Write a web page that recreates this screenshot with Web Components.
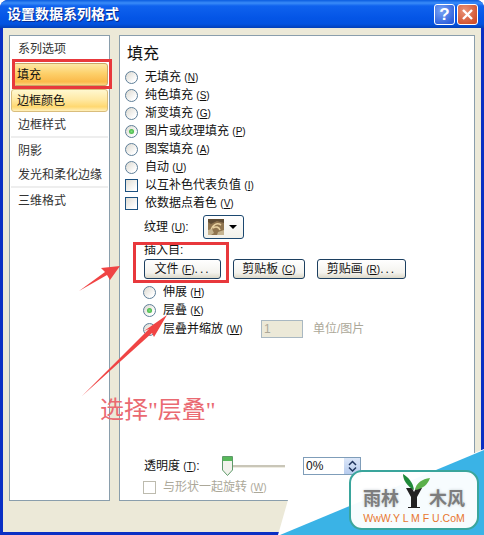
<!DOCTYPE html>
<html lang="zh">
<head>
<meta charset="utf-8">
<title>设置数据系列格式</title>
<style>
  html, body { margin: 0; background: #fff; }
  body { font: 12px/18px "Liberation Sans", "Noto Sans CJK SC", sans-serif; color: #111; }
</style>
</head>
<body>
<format-dialog>
  <span slot="title">设置数据系列格式</span>

  <nav-list slot="nav">
    <nav-item>系列选项</nav-item>
    <nav-item state="selected">填充</nav-item>
    <nav-item state="hover">边框颜色</nav-item>
    <nav-item>边框样式</nav-item>
    <nav-sep></nav-sep>
    <nav-item>阴影</nav-item>
    <nav-item>发光和柔化边缘</nav-item>
    <nav-sep></nav-sep>
    <nav-item>三维格式</nav-item>
  </nav-list>

  <fill-panel slot="panel">
    <x-option>无填充 <x-key>N</x-key></x-option>
    <x-option>纯色填充 <x-key>S</x-key></x-option>
    <x-option>渐变填充 <x-key>G</x-key></x-option>
    <x-option checked>图片或纹理填充 <x-key>P</x-key></x-option>
    <x-option>图案填充 <x-key>A</x-key></x-option>
    <x-option>自动 <x-key>U</x-key></x-option>
    <x-option type="check">以互补色代表负值 <x-key>I</x-key></x-option>
    <x-option type="check">依数据点着色 <x-key>V</x-key></x-option>

    <texture-row>纹理 <x-key>U</x-key>:</texture-row>

    <insert-group>
      <span slot="label">插入自:</span>
      <x-button w="77">文件 <x-key>F</x-key><span style="letter-spacing:2px">...</span></x-button>
      <x-button w="72">剪贴板 <x-key>C</x-key></x-button>
      <x-button w="89">剪贴画 <x-key>R</x-key><span style="letter-spacing:2px">...</span></x-button>
    </insert-group>

    <x-option indent>伸展 <x-key>H</x-key></x-option>
    <x-option indent checked>层叠 <x-key>K</x-key></x-option>
    <scale-row>层叠并缩放 <x-key>W</x-key></scale-row>

    <opacity-row slot="bottom">透明度 <x-key>T</x-key>:</opacity-row>
    <x-option slot="bottom" type="check" indent disabled>与形状一起旋转 <x-key>W</x-key></x-option>
  </fill-panel>
</format-dialog>
<photo-marks></photo-marks>
<site-badge></site-badge>

<script>
// every element keeps its styles in its own shadow root
class Base extends HTMLElement {
  constructor() {
    super();
    this.attachShadow({ mode: "open" });
  }
  connectedCallback() {
    this.shadowRoot.innerHTML = `<style>${this.constructor.styles}</style>${this.markup()}`;
  }
  markup() { return "<slot></slot>"; }
}

class FormatDialog extends Base {
  static styles = `
    :host { display: flex; flex-direction: column; width: 484px; height: 535px; box-sizing: border-box;
      background: #0a2fc4; border-radius: 8px 8px 0 0; overflow: hidden; }
    .bar { height: 28px; flex: none; display: flex; align-items: center; padding: 0 6px 0 7px;
      background: linear-gradient(#0a5ce0 0, #3a8cf8 3px, #0f62ee 6px, #0455e6 18px, #0353e0 24px, #0340b8 28px);
      color: #fff; font-weight: bold; font-size: 14px; text-shadow: 1px 1px 0 #0a2c90; }
    .title { flex: 1; }
    .cap { width: 21px; height: 21px; box-sizing: border-box; border: 1px solid #fff; border-radius: 3px;
      margin-left: 2px; display: grid; place-items: center; }
    .help { background: radial-gradient(circle at 35% 30%, #7aa4f4, #2d5fdc 80%); color: #fff; font: bold 17px/1 "Liberation Sans", sans-serif; text-shadow: none; }
    .close { background: radial-gradient(circle at 35% 30%, #ea9478, #d0502c 80%); }
    .body { flex: 1; margin: 0 3px 3px; background: #ece9d8; display: flex; gap: 9px; padding: 7px 6px 31px; }
    ::slotted([slot=nav]) { width: 101px; }
    ::slotted([slot=panel]) { width: 356px; }
  `;
  markup() {
    return `
      <div class="bar">
        <div class="title"><slot name="title"></slot></div>
        <div class="cap help">?</div>
        <div class="cap close">
          <svg width="13" height="13" viewBox="0 0 13 13"><path d="M2 2 11 11M11 2 2 11" stroke="#fff" stroke-width="2.4"/></svg>
        </div>
      </div>
      <div class="body">
        <slot name="nav"></slot>
        <slot name="panel"></slot>
      </div>`;
  }
}

class NavList extends Base {
  static styles = `
    :host { display: flex; flex-direction: column; box-sizing: border-box; border: 1px solid #8a9eac;
      background: #fff; padding: 0 1px; }
  `;
}

class NavItem extends Base {
  static styles = `
    :host { display: flex; align-items: center; height: 24px; box-sizing: border-box; padding: 1px 0 0 7px; flex: none; color: #333; }
    :host([state]) { height: 23px; margin-top: 3px; border-radius: 3px; color: #111; padding-left: 6px; }
    :host([state=selected]) { margin-left: 2px; margin-right: 0; border: 1px solid #c9a668; padding-left: 3px;
      background: linear-gradient(#fde7a4, #fdd06a 45%, #fbb94a 85%, #fdd480); }
    :host([state=hover]) { border: 1px solid #d9bd7c; padding-left: 5px;
      background: linear-gradient(#fff7cf, #ffe9a4 45%, #ffd870 80%, #fff0bc); }
  `;
}

class NavSep extends Base {
  static styles = `:host { display: block; height: 2px; background: #eeeeee; flex: none; }`;
  markup() { return ""; }
}

class FillPanel extends Base {
  static styles = `
    :host { display: flex; flex-direction: column; box-sizing: border-box; border: 1px solid #8a9eac;
      background: #fff; padding: 7px 5px 4px; }
    h2 { margin: 0 0 4px; font: 16px/21px "Liberation Sans", "Noto Sans CJK SC", sans-serif; padding-left: 2px; }
    .bottom { margin-top: auto; display: flex; flex-direction: column; gap: 2px; }
  `;
  markup() {
    return `<h2>填充</h2><slot></slot><div class="bottom"><slot name="bottom"></slot></div>`;
  }
}

class XKey extends Base {
  static styles = `:host { display: inline; font-size: 10px; }`;
  markup() { return `(<u><slot></slot></u>)`; }
}

class XOption extends Base {
  static styles = `
    :host { display: flex; align-items: center; height: 18px; gap: 7px; flex: none; }
    :host([indent]) { margin-left: 18px; }
    :host([disabled]) { color: #aca899; }
    .text { padding-top: 1px; }
    .radio { width: 13px; height: 13px; box-sizing: border-box; border-radius: 50%; border: 1px solid #5f7f99;
      background: linear-gradient(135deg, #dcd9d0, #fff 80%); display: grid; place-items: center; }
    .radio i { width: 5px; height: 5px; border-radius: 50%; background: radial-gradient(#7fe07f, #2ea32e); }
    .check { width: 13px; height: 13px; box-sizing: border-box; border: 1px solid #1c5180;
      background: linear-gradient(135deg, #e0ddd4, #fff 85%); }
    :host([disabled]) .check { border-color: #bdbbae; background: #fff; }
  `;
  markup() {
    const box = this.getAttribute("type") === "check"
      ? `<span class="check"></span>`
      : `<span class="radio">${this.hasAttribute("checked") ? "<i></i>" : ""}</span>`;
    return `${box}<span class="text"><slot></slot></span>`;
  }
}

class TextureRow extends Base {
  static styles = `
    :host { display: flex; align-items: center; height: 24px; margin-top: 3px; padding-left: 19px; flex: none; }
    .label { width: 59px; }
    .pick { width: 41px; height: 24px; box-sizing: border-box; border: 1px solid #1c4870; border-radius: 3px;
      background: linear-gradient(#fff, #f2f1ea); display: flex; align-items: center; gap: 5px; padding-left: 4px; }
    .arrow { width: 0; height: 0; border: 4px solid transparent; border-top: 4px solid #000; border-bottom: 0; }
  `;
  markup() {
    return `
      <span class="label"><slot></slot></span>
      <span class="pick">
        <svg width="16" height="16" viewBox="0 0 16 16">
          <rect width="16" height="16" fill="#8f744e"/>
          <path d="M0 0H16V4L9 2 3 5 0 3Z" fill="#5f4c34"/>
          <path d="M3 12C4 6 9 3 13 6M5 9C8 7 11 8 12 11" stroke="#e6cf9e" stroke-width="1.6" fill="none"/>
          <path d="M0 11 4 10 6 14 3 16H0ZM10 13 16 11V16H9Z" fill="#c4b38f"/>
        </svg>
        <span class="arrow"></span>
      </span>`;
  }
}

class InsertGroup extends Base {
  static styles = `
    :host { display: block; padding-left: 19px; flex: none; }
    .label { height: 16px; line-height: 17px; margin-top: 3px; }
    .btns { display: flex; gap: 12px; margin-top: 1px; margin-bottom: 4px; }
  `;
  markup() {
    return `<div class="label"><slot name="label"></slot></div><div class="btns"><slot></slot></div>`;
  }
}

class XButton extends Base {
  static styles = `
    :host { display: flex; align-items: center; justify-content: center; height: 20px; box-sizing: border-box;
      border: 1px solid #1c3f60; border-radius: 3px; padding-top: 1px;
      background: linear-gradient(#fff, #f4f3ee 70%, #dcd8c8); }
  `;
  markup() { return `<span><slot></slot></span>`; }
  connectedCallback() {
    super.connectedCallback();
    this.style.width = this.getAttribute("w") + "px";
  }
}

class ScaleRow extends Base {
  static styles = `
    :host { display: flex; align-items: center; height: 20px; margin-left: 18px; flex: none; }
    .radio { width: 13px; height: 13px; box-sizing: border-box; border-radius: 50%; border: 1px solid #5f7f99;
      background: linear-gradient(135deg, #dcd9d0, #fff 80%); margin-right: 7px; }
    .text { width: 98px; }
    .num { width: 42px; height: 18px; box-sizing: border-box; border: 1px solid #a9b8c2; background: #ece9d8;
      color: #aca899; padding-left: 2px; line-height: 16px; }
    .unit { margin-left: 10px; color: #aca899; }
  `;
  markup() {
    return `<span class="radio"></span><span class="text"><slot></slot></span>
      <span class="num">1</span><span class="unit">单位/图片</span>`;
  }
}

class OpacityRow extends Base {
  static styles = `
    :host { display: flex; align-items: center; height: 20px; padding-left: 19px; flex: none; }
    .label { width: 78px; }
    .slider { width: 81px; height: 20px; position: relative; display: flex; align-items: center; }
    .track { width: 63px; height: 2px; background: #c9c6b8; border-bottom: 1px solid #eeece2; }
    .thumb { position: absolute; left: 0; top: 0; }
    .num { width: 58px; height: 18px; box-sizing: border-box; border: 1px solid #7f9db9; display: flex;
      align-items: center; justify-content: space-between; padding: 0 0 0 2px; background: #fff; }
    .spin { width: 16px; height: 16px; background: linear-gradient(#dbe6f8, #b7ccee); display: grid; place-items: center; }
  `;
  markup() {
    return `
      <span class="label"><slot></slot></span>
      <span class="slider">
        <span class="track"></span>
        <svg class="thumb" width="11" height="20" viewBox="0 0 11 20">
          <path d="M.5 .5H10.5V14L5.5 19.5 .5 14Z" fill="#f2f2ec" stroke="#5f9a6a"/>
          <rect x="1" y="1" width="9" height="4" fill="#57b85a"/>
        </svg>
      </span>
      <span class="num">0%
        <span class="spin">
          <svg width="9" height="12" viewBox="0 0 9 12"><path d="M1 5 4.5 1.5 8 5M1 7.5 4.5 11 8 7.5" fill="none" stroke="#20355e" stroke-width="1.5"/></svg>
        </span>
      </span>`;
  }
}

// red marks drawn over the photographed dialog
class PhotoMarks extends Base {
  static styles = `
    :host { position: absolute; left: 0; top: 0; width: 484px; height: 535px; pointer-events: none; }
    svg { position: absolute; left: 0; top: 0; }
    .note { position: absolute; left: 100px; top: 393px; font-size: 24px; line-height: 34px; color: #ea6a72;
      font-family: "Liberation Serif", "Noto Sans CJK SC", sans-serif; white-space: nowrap; }
  `;
  markup() {
    return `
      <svg width="484" height="535" viewBox="0 0 484 535">
        <rect x="13.5" y="60.5" width="97" height="27" fill="none" stroke="#e8383c" stroke-width="3"/>
        <rect x="134.5" y="243.5" width="93" height="38" fill="none" stroke="#e8383c" stroke-width="3"/>
        <path d="M79 291 105 272 101 268 120 266 110 280 107 275Z" fill="#f04444"/>
        <path d="M82 396 149 329 144 331 167 315 154 337 152 333Z" fill="#f04444"/>
      </svg>
      <div class="note">选择"层叠"</div>`;
  }
}

class SiteBadge extends Base {
  static styles = `
    :host { position: absolute; left: 0; top: 0; width: 484px; height: 535px; pointer-events: none; }
    svg { position: absolute; left: 0; top: 0; }
    .card { position: absolute; left: 349px; top: 470px; width: 130px; height: 60px; box-sizing: border-box;
      border: 2px solid #3aa59c; border-radius: 13px; background: rgba(255,255,255,.96);
      display: flex; flex-direction: column; align-items: center; padding-top: 14px; }
    .name { display: flex; height: 22px; font: bold 18px/22px "Noto Sans CJK SC", sans-serif;
      color: #7d7d7d; text-shadow: 0 0 3px #c4ccd0; }
    .name .tree { position: static; flex: none; align-self: flex-end; overflow: visible; }
    .site { font: 10.5px/14px "Liberation Sans", sans-serif; color: #e8772e; margin-top: 3px; white-space: nowrap; }
  `;
  markup() {
    return `
      <svg width="484" height="535" viewBox="0 0 484 535">
        <path d="M288 500 278 535H484V449L465 457Z" fill="#fff"/>
        <path d="M280 535 484 450V535Z" fill="#3ab3e6"/>
      </svg>
      <div class="card">
        <div class="name">
          <span>雨林</span>
          <svg class="tree" width="30" height="36" viewBox="0 0 30 36">
            <path d="M7 16H13L15 20 17 16H23L18 25V35H21V36H9V35H12V25Z" fill="#222"/>
            <path d="M15 18C14 10 9 5 4 2 4 8 8 14 15 18Z" fill="#1f8a3a"/>
            <path d="M16 18C17 11 23 7 31 6 29 12 24 17 16 18Z" fill="#5bb04a"/>
          </svg>
          <span>木风</span>
        </div>
        <div class="site">WwW.Y L M F U.CoM</div>
      </div>`;
  }
}

const tags = {
  "format-dialog": FormatDialog, "nav-list": NavList, "nav-item": NavItem, "nav-sep": NavSep,
  "fill-panel": FillPanel, "x-key": XKey, "x-option": XOption, "texture-row": TextureRow,
  "insert-group": InsertGroup, "x-button": XButton, "scale-row": ScaleRow, "opacity-row": OpacityRow,
  "photo-marks": PhotoMarks, "site-badge": SiteBadge
};
for (const [name, cls] of Object.entries(tags)) customElements.define(name, cls);
</script>
</body>
</html>
